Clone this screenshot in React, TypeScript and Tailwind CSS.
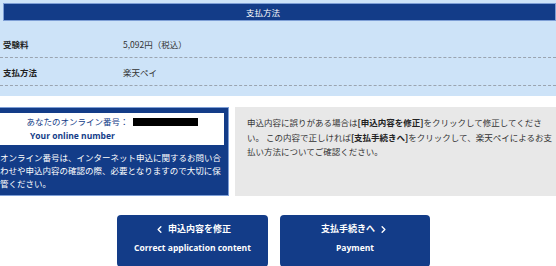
import { ChevronLeft, ChevronRight } from 'lucide-react';

const jp = { fontFamily: '"Noto Sans CJK JP", "Liberation Sans", sans-serif' };
const en = { fontFamily: '"Open Sans", "Liberation Sans", sans-serif' };

const rows = [
  { label: '受験料', value: '5,092円（税込）' },
  { label: '支払方法', value: '楽天ペイ' },
];

export default function App() {
  return (
    <div className="w-[556px] h-[266px] overflow-hidden bg-white text-[8.5px] text-[#333]" style={jp}>
      {/* 支払方法 summary */}
      <div className="bg-[#cde3f8] pt-[3px] pb-[10px]">
        <div className="ml-[3px] h-[18px] flex items-center justify-center pr-[33px] bg-[#133c88] border border-[#7e9fd6] text-white">
          支払方法
        </div>
        <div className="mt-[9px]">
          {rows.map((row) => (
            <div key={row.label} className="h-[28px] flex items-center pt-[2px] border-b border-dashed border-[#9aa4b0]">
              <span className="w-[123px] shrink-0 pl-[3px] font-bold text-[#222]">{row.label}</span>
              <span className="text-[#333]">{row.value}</span>
            </div>
          ))}
        </div>
      </div>

      {/* online number + notes */}
      <div className="mt-[11px] flex gap-[6px] h-[89px]">
        <div className="w-[229px] shrink-0 bg-[#133c88] border border-[#7e9fd6] border-l-0 pt-[5px] pr-[4px]">
          <div className="bg-white h-[32px] flex flex-col text-[#133c88]">
            <div className="flex items-center justify-center gap-[4px] h-[15px] mt-[1px]">
              <span>あなたのオンライン番号：</span>
              <span className="w-[65px] h-[8px] bg-black" />
            </div>
            <div className="pl-[30px] font-bold text-[8.5px] leading-[14px]" style={en}>
              Your online number
            </div>
          </div>
          <p className="mt-[6px] text-white leading-[13px] whitespace-nowrap">
            オンライン番号は、インターネット申込に関するお問い合
            <br />
            わせや申込内容の確認の際、必要となりますので大切に保
            <br />
            管ください。
          </p>
        </div>

        <div className="flex-1 bg-[#e8e8e8] pl-[12px] pt-[8px]">
          <p className="leading-[14.5px] whitespace-nowrap text-[#333]">
            申込内容に誤りがある場合は<b className="text-[#222]">[申込内容を修正]</b>をクリックして修正してくださ
            <br />
            い。 この内容で正しければ<b className="text-[#222]">[支払手続きへ]</b>をクリックして、楽天ペイによるお支
            <br />
            払い方法についてご確認ください。
          </p>
        </div>
      </div>

      {/* actions */}
      <div className="mt-[19px] flex gap-[12px] pl-[117px]">
        <button className="w-[151px] h-[52px] rounded-[4px] bg-[#133c88] text-white font-bold flex flex-col items-center pt-[7px]">
          <span className="flex items-center gap-[3px] h-[14px] text-[9px]">
            <ChevronLeft size={11} strokeWidth={3} />
            申込内容を修正
          </span>
          <span className="mt-[6px] text-[8.5px]" style={en}>Correct application content</span>
        </button>
        <button className="w-[150px] h-[52px] rounded-[4px] bg-[#133c88] text-white font-bold flex flex-col items-center pt-[7px]">
          <span className="flex items-center gap-[3px] h-[14px] text-[9px]">
            支払手続きへ
            <ChevronRight size={11} strokeWidth={3} />
          </span>
          <span className="mt-[6px] text-[8.5px]" style={en}>Payment</span>
        </button>
      </div>
    </div>
  );
}
